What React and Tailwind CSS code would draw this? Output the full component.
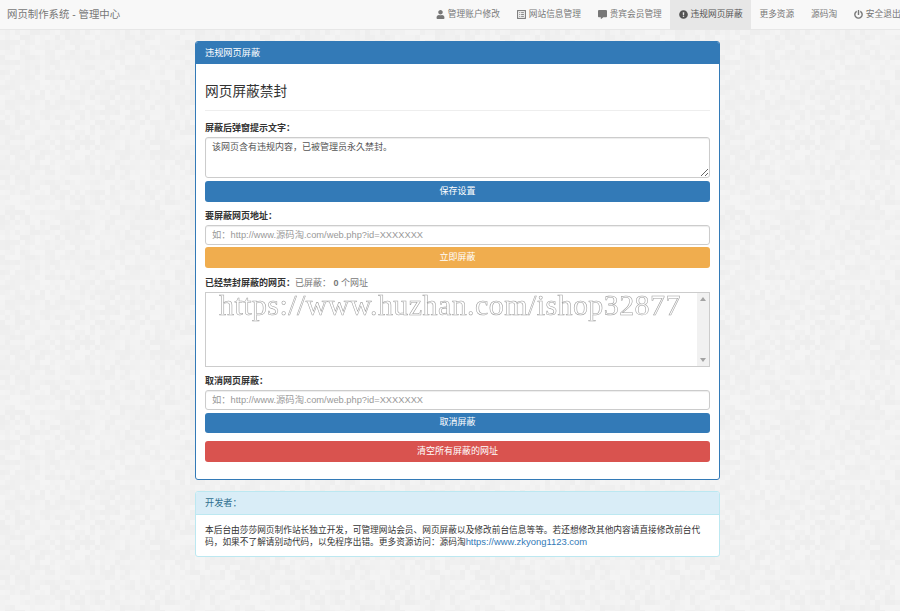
import { FaUser, FaCommentAlt, FaExclamationCircle, FaPowerOff } from 'react-icons/fa'

const FONT = "font-['Liberation_Sans','Noto_Sans_CJK_SC',sans-serif]"

function ListAlt() {
  return (
    <svg width="9" height="9" viewBox="0 0 12 12" fill="none" stroke="currentColor">
      <rect x="0.8" y="0.8" width="10.4" height="10.4" strokeWidth="1.4" />
      <path d="M3 3.5h1.4M5.5 3.5H9.2M3 6h1.4M5.5 6H9.2M3 8.5h1.4M5.5 8.5H9.2" strokeWidth="1.2" />
    </svg>
  )
}

const NAV = [
  { label: '管理账户修改', icon: <FaUser size={9} /> },
  { label: '网站信息管理', icon: <ListAlt /> },
  { label: '贵宾会员管理', icon: <FaCommentAlt size={9} /> },
  { label: '违规网页屏蔽', icon: <FaExclamationCircle size={9} />, active: true },
  { label: '更多资源' },
  { label: '源码淘' },
  { label: '安全退出', icon: <FaPowerOff size={9} /> },
]

// pale speckled page texture
function Texture() {
  let seed = 7
  const cells = []
  for (let y = 0; y < 40; y++) {
    for (let x = 0; x < 48; x++) {
      seed = (seed * 1103515245 + 12345) & 0x7fffffff
      const v = 238 + (seed >> 8) % 7
      cells.push(<rect key={`${x}-${y}`} x={x * 5} y={y * 5} width="5" height="5" fill={`rgb(${v},${v},${v})`} />)
    }
  }
  return (
    <svg className="absolute inset-0" width="900" height="611">
      <defs>
        <pattern id="speckle" width="240" height="200" patternUnits="userSpaceOnUse">{cells}</pattern>
      </defs>
      <rect width="900" height="611" fill="url(#speckle)" />
    </svg>
  )
}

function Label({ children }) {
  return <label className="block font-bold text-[9px] leading-[12px] text-[#333]">{children}</label>
}

function Btn({ color, className = '', children }) {
  return (
    <button className={`block w-full h-[20.5px] rounded-[3px] text-white text-[9px] text-center ${color} ${className}`}>
      {children}
    </button>
  )
}

function UrlInput() {
  return (
    <input
      placeholder="如：http://www.源码淘.com/web.php?id=XXXXXXX"
      className="block w-full h-[20px] px-[6px] bg-white border border-[#ccc] rounded-[3px] text-[9.3px] text-[#555] placeholder:text-[#999] outline-none shadow-[inset_0_1px_1px_rgba(0,0,0,0.075)]"
    />
  )
}

export default function App() {
  return (
    <div className={`relative w-[900px] h-[611px] overflow-hidden bg-[#efefef] ${FONT}`}>
      <Texture />
      <div className="relative">
        <nav className="flex items-stretch justify-between h-[30px] bg-[#f8f8f8] border-b border-[#e7e7e7] pl-[7px] text-[#777] overflow-hidden">
          <span className="text-[10.4px] leading-[29px] whitespace-pre">网页制作系统 - 管理中心</span>
          <ul className="flex shrink-0 -mr-[9px]">
            {NAV.map(n => (
              <li key={n.label} className={`flex items-center gap-[3px] px-[8.4px] text-[8.7px] whitespace-nowrap ${n.active ? 'bg-[#e7e7e7] text-[#555]' : ''}`}>
                {n.icon}
                <span>{n.label}</span>
              </li>
            ))}
          </ul>
        </nav>

        <div className="ml-[195px] w-[525px] mt-[11px]">
          <section className="bg-white border border-[#337ab7] rounded-[3px] h-[439px] overflow-hidden">
            <h2 className="h-[22px] bg-[#337ab7] text-white text-[9.2px] leading-[22px] px-[9px]">违规网页屏蔽</h2>
            <div className="px-[9px]">
              <h3 className="mt-[18px] pb-[9px] border-b border-[#eee] text-[13.7px] leading-[19px] text-[#333]">网页屏蔽禁封</h3>
              <div className="mt-[11px]"><Label>屏蔽后弹窗提示文字：</Label></div>
              <textarea
                defaultValue="该网页含有违规内容，已被管理员永久禁封。"
                className="block mt-[3px] w-full h-[41px] px-[6px] py-[3px] bg-white border border-[#ccc] rounded-[3px] text-[9px] leading-[13px] text-[#555] outline-none shadow-[inset_0_1px_1px_rgba(0,0,0,0.075)]"
              />
              <Btn color="bg-[#337ab7]" className="mt-[3px]">保存设置</Btn>
              <div className="mt-[8.5px]"><Label>要屏蔽网页地址：</Label></div>
              <div className="mt-[3px]"><UrlInput /></div>
              <Btn color="bg-[#f0ad4e]" className="mt-[2px]">立即屏蔽</Btn>
              <div className="mt-[9.5px] text-[9px] leading-[12px] text-[#777]">
                <span className="font-bold text-[#333]">已经禁封屏蔽的网页：</span>已屏蔽： <b>0</b> 个网址
              </div>
              <div className="relative flex mt-[3px] h-[75px] bg-white border border-[#ccc]">
                <textarea className="block flex-1 resize-none outline-none" />
                <div className="flex flex-col items-center justify-between w-[12px] py-[4px] bg-[#f1f1f1] text-[#a3a3a3]">
                  <svg width="6" height="4" viewBox="0 0 6 4"><path d="M3 0L6 4H0z" fill="currentColor" /></svg>
                  <svg width="6" height="4" viewBox="0 0 6 4"><path d="M0 0H6L3 4z" fill="currentColor" /></svg>
                </div>
                <span className="absolute left-[13px] top-[-3px] [will-change:transform] pointer-events-none font-['Liberation_Serif',serif] text-[30px] tracking-[0.42px] leading-[30px] whitespace-nowrap text-white [-webkit-text-stroke:0.55px_#a0a0a0]">
                  https://www.huzhan.com/ishop32877
                </span>
              </div>
              <div className="mt-[8px]"><Label>取消网页屏蔽：</Label></div>
              <div className="mt-[2.5px]"><UrlInput /></div>
              <Btn color="bg-[#337ab7]" className="mt-[3px]">取消屏蔽</Btn>
              <Btn color="bg-[#d9534f]" className="mt-[8px]">清空所有屏蔽的网址</Btn>
            </div>
          </section>

          <section className="mt-[11px] bg-white border border-[#bce8f1] rounded-[3px] h-[66px] overflow-hidden">
            <h2 className="h-[23px] bg-[#d9edf7] text-[#31708f] text-[9.2px] leading-[23px] px-[9px] border-b border-[#bce8f1]">开发者：</h2>
            <p className="px-[9px] pt-[9px] text-[8.7px] leading-[12px] text-[#333]">
              本后台由莎莎网页制作站长独立开发，可管理网站会员、网页屏蔽以及修改前台信息等等。若还想修改其他内容请直接修改前台代码，如果不了解请别动代码，以免程序出错。更多资源访问：源码淘<a className="text-[#337ab7] text-[9.45px]">https://www.zkyong1123.com</a>
            </p>
          </section>
        </div>
      </div>
    </div>
  )
}
